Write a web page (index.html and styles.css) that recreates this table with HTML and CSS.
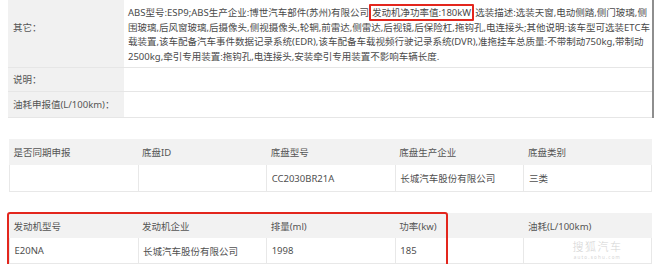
FILE: index.html
```
<!DOCTYPE html>
<html lang="zh-CN">
<head>
<meta charset="utf-8">
<title>车型参数</title>
<link rel="stylesheet" href="styles.css">
</head>
<body>
<div class="page">
  <div class="spec">
    <div class="lab lab-top">其它：</div>
    <div class="val val-top">
      <span class="ln">ABS型号:ESP9;ABS生产企业:博世汽车部件(苏州)有限公司<span class="mark">发动机净功率值:180kW</span>选装描述:选装天窗,电动侧踏,侧门玻璃,侧</span>
      <span class="ln">围玻璃,后风窗玻璃,后摄像头,侧视摄像头,轮辋,前雷达,侧雷达,后视镜,后保险杠,拖钩孔,电连接头;其他说明:该车型可选装ETC车</span>
      <span class="ln">载装置,该车配备汽车事件数据记录系统(EDR),该车配备车载视频行驶记录系统(DVR),准拖挂车总质量:不带制动750kg,带制动</span>
      <span class="ln">2500kg,牵引专用装置:拖钩孔,电连接头,安装牵引专用装置不影响车辆长度.</span>
    </div>
    <div class="lab">说明：</div>
    <div class="val"></div>
    <div class="lab">油耗申报值(L/100km)：</div>
    <div class="val"></div>
  </div>

  <div class="grid5 chassis">
    <div class="th">是否同期申报</div>
    <div class="th">底盘ID</div>
    <div class="th">底盘型号</div>
    <div class="th">底盘生产企业</div>
    <div class="th">底盘类别</div>
    <div class="td"></div>
    <div class="td"></div>
    <div class="td">CC2030BR21A</div>
    <div class="td">长城汽车股份有限公司</div>
    <div class="td td-last">三类</div>
  </div>

  <div class="grid5 engine">
    <div class="th">发动机型号</div>
    <div class="th">发动机企业</div>
    <div class="th">排量(ml)</div>
    <div class="th">功率(kw)</div>
    <div class="th">油耗(L/100km)</div>
    <div class="td">E20NA</div>
    <div class="td">长城汽车股份有限公司</div>
    <div class="td">1998</div>
    <div class="td">185</div>
    <div class="td td-last wm-cell">
      <span class="wm"><span class="wm-big">搜狐汽车</span><span class="wm-small">auto.sohu.com</span></span>
    </div>
  </div>
</div>
</body>
</html>
```
FILE: styles.css
```
* { box-sizing: border-box; }

body {
  margin: 0;
  background: #fff;
  color: #555;
  font-family: "Noto Sans", "Noto Sans CJK SC", sans-serif;
  font-size: 9.5px;
}

.page {
  padding-left: 8px;
}

/* top spec block */
.spec {
  display: grid;
  grid-template-columns: 116px 1fr;
  grid-template-rows: 68px 24px 26px;
  width: 646px;
  border-right: 2px solid #8e8e8e;
}

.lab {
  background: #f1f1f1;
  border-bottom: 1px solid #e6e6e6;
  padding-left: 5px;
  display: flex;
  align-items: center;
  line-height: 14px;
  color: #555;
}

.lab-top {
  align-items: flex-start;
  padding-top: 21px;
}

.val {
  border-bottom: 1px solid #e6e6e6;
  padding-left: 4px;
}

.val-top {
  padding-top: 6px;
  line-height: 14.7px;
  color: #4a4a4a;
}

.ln {
  display: block;
  white-space: nowrap;
}

.mark {
  border: 2px solid #e3261d;
  border-radius: 1px;
  padding: 0 1px;
  margin: 0 1px 0 0;
}

/* 5-column tables */
.grid5 {
  display: grid;
  grid-template-columns: repeat(5, 1fr);
  width: 643px;
  margin-left: 1px;
  position: relative;
}

.chassis {
  margin-top: 21px;
  grid-template-rows: 26px 27px;
}

.engine {
  margin-top: 21px;
  grid-template-rows: 25px 26px;
}

.th {
  background: #f2f2f2;
  padding-left: 4.5px;
  display: flex;
  align-items: center;
  color: #555;
}

.td {
  border-left: 1px solid #e8e8e8;
  border-bottom: 1px solid #e8e8e8;
  padding-left: 4.5px;
  display: flex;
  align-items: center;
  color: #4f4f4f;
}

.td-last {
  border-right: 1px solid #e8e8e8;
}

/* red highlight over the first four engine columns */
.engine::after {
  content: "";
  position: absolute;
  left: -2px;
  top: -1px;
  width: 437px;
  height: 54px;
  border: 2px solid #e3261d;
  border-radius: 3px;
  pointer-events: none;
}

.wm-cell {
  position: relative;
}

.wm {
  position: absolute;
  left: 48px;
  top: 2px;
  display: flex;
  flex-direction: column;
  align-items: center;
  color: #d4d4d4;
}

.wm-big {
  display: block;
  font-size: 11px;
  line-height: 12px;
  letter-spacing: 1.5px;
  font-family: "Noto Sans CJK SC", sans-serif;
  font-weight: 300;
}

.wm-small {
  display: block;
  font-size: 4.5px;
  line-height: 5px;
  letter-spacing: 1.2px;
  margin-top: 3px;
}
```
